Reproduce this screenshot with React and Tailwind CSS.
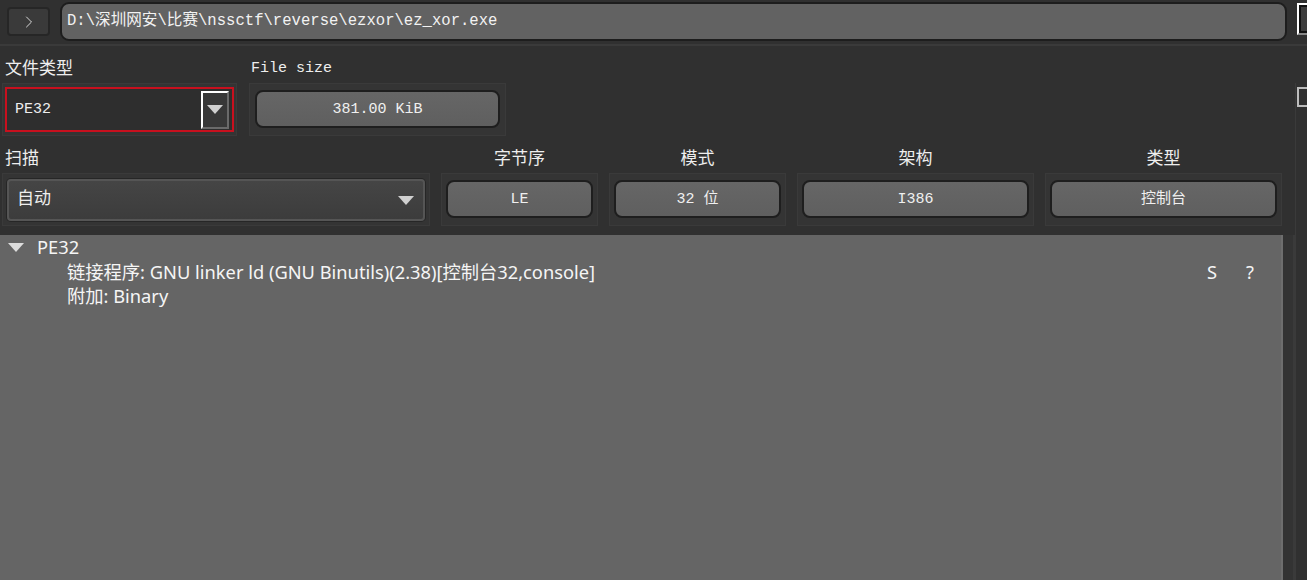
import { ChevronRight } from 'lucide-react';

const mono = "font-['Liberation_Mono','Noto_Sans_CJK_SC',monospace]";
const sans = "font-['Noto_Sans','Noto_Sans_CJK_SC',sans-serif]";

function Frame({ className = '', children }) {
    return (
        <div className={`border border-[#3a3a3a] bg-[#343434] ${className}`}>
            {children}
        </div>
    );
}

function ValueButton({ children }) {
    return (
        <div className="flex h-[38px] items-center justify-center rounded-[8px] border-2 border-[#1e1e1e] bg-[linear-gradient(#666666,#5f5f5f)] pt-[3px] text-[15px] text-[#f0f0f0]">
            {children}
        </div>
    );
}

function Triangle({ className = '' }) {
    return (
        <svg width="16" height="9" viewBox="0 0 16 9" className={className}>
            <path d="M0 0 H16 L8 9 Z" fill="#d0d0d0" />
        </svg>
    );
}

export default function App() {
    const infos = [
        { label: '字节序', value: 'LE', w: 'w-[157px]' },
        { label: '模式', value: '32 位', w: 'w-[177px]' },
        { label: '架构', value: 'I386', w: 'w-[237px]' },
        { label: '类型', value: '控制台', w: 'w-[237px]' },
    ];

    return (
        <div className={`flex h-[580px] w-[1307px] flex-col overflow-hidden bg-[#303030] text-[#eeeeee] ${mono}`}>
            {/* path bar */}
            <div className="flex h-[44px] shrink-0 items-start overflow-hidden pt-[2px]">
                <div className="ml-[7px] mt-[5px] flex h-[29px] w-[43px] shrink-0 items-center justify-center rounded-[4px] border-2 border-[#262626] bg-[#3a3a3a]">
                    <ChevronRight size={20} strokeWidth={1.2} className="text-[#d8d8d8]" />
                </div>
                <div className="ml-[10px] flex h-[39px] w-[1227px] shrink-0 items-center rounded-[9px] border-2 border-[#1d1d1d] bg-[#626262] pl-[5px] pt-[1px] text-[15.6px] text-[#f2f2f2]">
                    D:\深圳网安\比赛\nssctf\reverse\ezxor\ez_xor.exe
                </div>
                <div className="ml-[10px] mt-[1px] h-[32px] w-[14px] shrink-0 border-2 border-r-0 border-white border-b-[#888] bg-[#111] p-[2px]">
                    <div className="h-full w-full bg-[#3c3c3c]" />
                </div>
            </div>
            <div className="h-[2px] shrink-0 bg-[#3a3a3a]" />

            <div className="flex min-h-0 flex-1">
                <div className="flex w-[1295px] flex-col">
                    {/* row 1 */}
                    <div className="flex gap-[12px] pl-[2px]">
                        <div className="flex w-[235px] flex-col">
                            <div className="flex h-[37px] items-center pl-[3px] pt-[11px] text-[17px]">文件类型</div>
                            <Frame className="h-[53px] px-[2px] pt-[3px]">
                                <div className="flex h-[45px] items-center border-2 border-[#c8101e] bg-[#2e2e2e] pl-[8px] pr-[3px] text-[15px]">
                                    <span className="flex-1 pt-[2px]">PE32</span>
                                    <div className="flex h-[38px] w-[28px] items-center justify-center border-2 border-white border-b-[#6a6a6a] border-r-[#6a6a6a] bg-[#383838]">
                                        <Triangle />
                                    </div>
                                </div>
                            </Frame>
                        </div>
                        <div className="flex w-[257px] flex-col">
                            <div className="flex h-[37px] items-center pl-[2px] pt-[10px] text-[15px]">File size</div>
                            <Frame className="h-[53px] px-[5px] pt-[6px]">
                                <ValueButton>381.00 KiB</ValueButton>
                            </Frame>
                        </div>
                    </div>

                    {/* row 2 */}
                    <div className="flex gap-[11px] pl-[2px]">
                        <div className="flex w-[428px] flex-col">
                            <div className="flex h-[37px] items-center pl-[3px] pt-[10px] text-[17px]">扫描</div>
                            <Frame className="h-[53px] px-[4px] pt-[5px]">
                                <div className="flex h-[42px] items-center rounded-[4px] border-2 border-[#555555] bg-[linear-gradient(#454545,#3c3c3c)] pl-[8px] pr-[9px] text-[17px] shadow-[0_0_0_1px_#262626]">
                                    <span className="flex-1">自动</span>
                                    <Triangle />
                                </div>
                            </Frame>
                        </div>
                        {infos.map((info) => (
                            <div key={info.label} className={`flex flex-col ${info.w}`}>
                                <div className="flex h-[37px] items-center justify-center pt-[10px] text-[17px]">{info.label}</div>
                                <Frame className="h-[53px] px-[4px] pt-[6px]">
                                    <ValueButton>{info.value}</ValueButton>
                                </Frame>
                            </div>
                        ))}
                    </div>

                    {/* result tree */}
                    <div className="mt-[9px] flex min-h-0 flex-1">
                        <div className={`w-[1281px] bg-[#656565] text-[18.3px] leading-[24.5px] text-[#f5f5f5] ${sans}`}>
                            <div className="flex items-center">
                                <svg width="16" height="9" viewBox="0 0 16 9" className="ml-[8px]">
                                    <path d="M0 0 H16 L8 9 Z" fill="#dddddd" />
                                </svg>
                                <span className="ml-[13px]">PE32</span>
                            </div>
                            <div className="flex pl-[67px]">
                                <span className="flex-1">链接程序: GNU linker ld (GNU Binutils)(2.38)[控制台32,console]</span>
                                <span className="w-[39px]">S</span>
                                <span className="w-[35px]">?</span>
                            </div>
                            <div className="pl-[67px]">附加: Binary</div>
                        </div>
                        <div className="w-[2px] bg-[#6e6e6e]" />
                        <div className="w-[10px] bg-[#333333]" />
                        <div className="w-[2px] bg-[#3a3a3a]" />
                    </div>
                </div>

                {/* right side panel */}
                <div className="flex w-[12px] flex-col pt-[37px]">
                    <div className="flex-1 border-l border-[#3a3a3a] pl-[1px] pt-[4px]">
                        <div className="h-[20px] w-[12px] border-2 border-r-0 border-[#bcbcbc]" />
                    </div>
                </div>
            </div>
        </div>
    );
}
